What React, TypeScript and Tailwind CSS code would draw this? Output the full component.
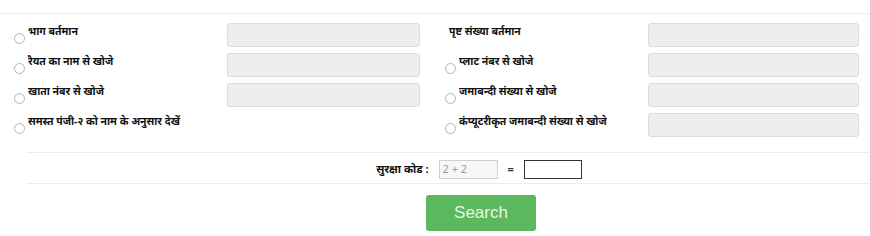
import React from 'react'

const font = { fontFamily: '"Noto Sans", "Liberation Sans", Arial, sans-serif' }

function Radio() {
  return (
    <span className="mt-[9px] mr-[3px] inline-block h-[11px] w-[11px] shrink-0 rounded-full border border-[#b5b5b5] bg-white" />
  )
}

function Label({ text, radio = true }: { text: string; radio?: boolean }) {
  return (
    <div className="flex items-start pt-[1px]">
      {radio && <Radio />}
      <span className="text-[10.5px] font-bold leading-[14px] text-[#111]">{text}</span>
    </div>
  )
}

function Field() {
  return <div className="h-[24px] rounded-[3px] border border-[#dcdcdc] bg-[#eeeeee]" />
}

export default function App() {
  return (
    <div className="h-[236px] w-[870px] bg-white" style={font}>
      <div className="pt-[13px]">
        <div className="border-t border-[#ececec]" />
        <div className="grid grid-cols-[227px_193px_228px_211px] gap-y-[6px] pt-[9px]">
          <div className="pl-[14px]"><Label text="भाग बर्तमान" /></div>
          <Field />
          <div className="pl-[29px]"><Label text="पृष्ट संख्या बर्तमान" radio={false} /></div>
          <Field />

          <div className="pl-[14px]"><Label text="रैयत का नाम से खोजे" /></div>
          <Field />
          <div className="pl-[25px]"><Label text="प्लाट नंबर से खोजे" /></div>
          <Field />

          <div className="pl-[14px]"><Label text="खाता नंबर से खोजे" /></div>
          <Field />
          <div className="pl-[25px]"><Label text="जमाबन्दी संख्या से खोजे" /></div>
          <Field />

          <div className="pl-[14px]"><Label text="समस्त पंजी-२ को नाम के अनुसार देखें" /></div>
          <div />
          <div className="pl-[25px]"><Label text="कंप्यूटरीकृत जमाबन्दी संख्या से खोजे" /></div>
          <Field />
        </div>
        <div className="ml-[27px] mt-[15px] border-t border-[#ececec]" />
        <div className="flex h-[30px] items-center justify-center pl-[88px] pt-[2px]">
          <span className="mr-[10px] text-[11px] font-bold text-[#111]">सुरक्षा कोड :</span>
          <div className="flex h-[19px] w-[59px] items-center border border-[#cfcfcf] bg-[#f7f7f7] px-[3px] text-[11px] text-[#999]">2 + 2</div>
          <span className="mx-[10px] text-[11px] font-bold text-[#333]">=</span>
          <div className="h-[19px] w-[58px] border border-[#333] bg-white" />
        </div>
        <div className="ml-[27px] border-t border-[#ececec]" />
        <div className="flex justify-center pt-[11px] pl-[92px]">
          <button
            type="button"
            className="h-[36px] w-[110px] rounded-[3px] bg-[#5cb85c] text-[17px] text-[#e8f8e0]"
            style={{ fontFamily: '"Liberation Sans", Arial, sans-serif' }}
          >
            Search
          </button>
        </div>
      </div>
    </div>
  )
}
